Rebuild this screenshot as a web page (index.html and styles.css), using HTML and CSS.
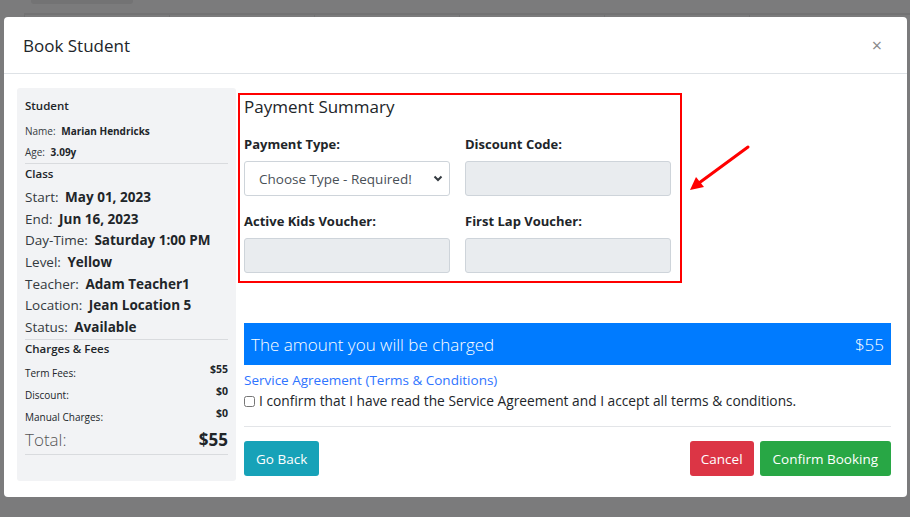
FILE: index.html
```html
<!DOCTYPE html>
<html lang="en">
<head>
    <meta charset="UTF-8">
    <meta name="viewport" content="width=device-width, initial-scale=1.0">
    <title>Book Student</title>
    <link rel="stylesheet" href="styles.css">
</head>
<body>
    <div class="backdrop-page">
        <div class="page-btn"></div>
        <div class="page-table">
            <span></span><span></span><span></span><span></span><span></span><span></span>
        </div>
    </div>

    <div class="modal">
        <div class="modal-header">
            <h5>Book Student</h5>
            <span class="close">&times;</span>
        </div>

        <div class="modal-body">
            <aside class="summary">
                <div class="group-title first">Student</div>
                <div class="small-row"><span>Name:</span> <b>Marian Hendricks</b></div>
                <div class="small-row"><span>Age:</span> <b>3.09y</b></div>
                <hr>
                <div class="group-title class-title">Class</div>
                <div class="big-row">Start: <b>May 01, 2023</b></div>
                <div class="big-row">End: <b>Jun 16, 2023</b></div>
                <div class="big-row">Day-Time: <b>Saturday 1:00 PM</b></div>
                <div class="big-row">Level: <b>Yellow</b></div>
                <div class="big-row">Teacher: <b>Adam Teacher1</b></div>
                <div class="big-row">Location: <b>Jean Location 5</b></div>
                <div class="big-row">Status: <b>Available</b></div>
                <hr>
                <div class="group-title fees-title">Charges &amp; Fees</div>
                <div class="fee-row"><span>Term Fees:</span><b>$55</b></div>
                <div class="fee-row"><span>Discount:</span><b>$0</b></div>
                <div class="fee-row"><span>Manual Charges:</span><b>$0</b></div>
                <div class="total-row"><span>Total:</span><b>$55</b></div>
                <hr>
            </aside>

            <section class="main">
                <div class="payment">
                    <h4>Payment Summary</h4>
                    <div class="form-grid">
                        <div class="field">
                            <label>Payment Type:</label>
                            <div class="select">
                                <span>Choose Type - Required!</span>
                                <svg width="10" height="7" viewBox="0 0 10 7"><path d="M1.5 1.5 L5 5 L8.5 1.5" fill="none" stroke="#343a40" stroke-width="2"/></svg>
                            </div>
                        </div>
                        <div class="field">
                            <label>Discount Code:</label>
                            <div class="input"></div>
                        </div>
                        <div class="field">
                            <label>Active Kids Voucher:</label>
                            <div class="input"></div>
                        </div>
                        <div class="field">
                            <label>First Lap Voucher:</label>
                            <div class="input"></div>
                        </div>
                    </div>
                    <div class="highlight"></div>
                    <svg class="arrow" width="70" height="50" viewBox="0 0 70 50">
                        <line x1="61" y1="4" x2="12" y2="40" stroke="#ff0000" stroke-width="3" stroke-linecap="round"/>
                        <polygon points="3,47 9,34 17,44" fill="#ff0000"/>
                    </svg>
                </div>

                <div class="charge-bar">
                    <span>The amount you will be charged</span>
                    <span>$55</span>
                </div>

                <a class="terms" href="#">Service Agreement (Terms &amp; Conditions)</a>
                <label class="confirm"><input type="checkbox"> I confirm that I have read the Service Agreement and I accept all terms &amp; conditions.</label>

                <div class="actions">
                    <button class="btn btn-info">Go Back</button>
                    <div class="right-btns">
                        <button class="btn btn-danger">Cancel</button>
                        <button class="btn btn-success">Confirm Booking</button>
                    </div>
                </div>
            </section>
        </div>
    </div>
</body>
</html>
```

FILE: styles.css
```css
body {
    margin: 0;
    background-color: #7b7b7c;
    font-family: 'Open Sans', sans-serif;
    color: #212529;
    height: 517px;
    overflow: hidden;
    position: relative;
}
.backdrop-page {
    position: absolute;
    top: 0;
    left: 0;
    right: 0;
}
.page-btn {
    position: absolute;
    left: 31px;
    top: -4px;
    width: 102px;
    height: 8px;
    border-radius: 3px;
    background-color: #737374;
}
.page-table {
    position: absolute;
    left: 24px;
    right: 0;
    top: 13px;
    height: 4px;
    border-top: 2px solid #727273;
    display: flex;
}
.page-table span {
    width: 144px;
    border-left: 1px solid #727273;
}
.modal {
    position: relative;
    margin: 17px 3px 0 4px;
    height: 480px;
    background-color: white;
    border-radius: 4px;
    box-sizing: border-box;
}
.modal-header {
    height: 57px;
    border-bottom: 1px solid #dee2e6;
    display: flex;
    align-items: center;
    justify-content: space-between;
    padding: 0 25px 0 19px;
    box-sizing: border-box;
}
.modal-header h5 {
    margin: 0;
    font-size: 17px;
    font-weight: 400;
}
.close {
    color: #8a8a8a;
    font-size: 18px;
    margin-top: 0;
}
.modal-body {
    display: grid;
    grid-template-columns: 219px 647px;
    column-gap: 8px;
    padding: 14px 16px 15px 13px;
}
.summary {
    background-color: #f2f3f5;
    border-radius: 3px;
    padding: 8px 8px 0;
    height: 393px;
    box-sizing: border-box;
}
.summary hr {
    border: none;
    border-top: 1px solid #d9dbde;
    margin: 0;
}
.group-title {
    font-size: 11.5px;
    font-weight: 600;
    height: 20px;
    line-height: 20px;
}
.group-title.first {
    margin-bottom: 5px;
}
.group-title.class-title {
    margin-bottom: 3px;
}
.group-title.fees-title {
    margin-top: -1px;
    margin-bottom: 3px;
}
.small-row {
    font-size: 10px;
    line-height: 21px;
    color: #343a40;
}
.small-row b {
    font-weight: 700;
    color: #212529;
    margin-left: 3px;
}
.big-row {
    font-size: 13.5px;
    line-height: 21.67px;
    color: #343a40;
}
.big-row b {
    font-weight: 700;
    color: #212529;
    margin-left: 3px;
}
.fee-row {
    display: flex;
    justify-content: space-between;
    font-size: 10px;
    line-height: 22px;
    height: 22px;
}
.fee-row b {
    font-size: 10.5px;
    margin-top: -4px;
}
.total-row {
    display: flex;
    justify-content: space-between;
    align-items: baseline;
    height: 26px;
}
.total-row span {
    font-size: 17px;
    font-weight: 300;
    color: #555;
}
.total-row b {
    font-size: 17px;
    font-weight: 700;
}
.main {
    display: flex;
    flex-direction: column;
    font-size: 13px;
}
.payment {
    position: relative;
    padding-top: 8px;
}
.payment h4 {
    margin: 0;
    font-size: 17px;
    font-weight: 400;
    line-height: 22px;
}
.form-grid {
    display: grid;
    grid-template-columns: 206px 206px;
    column-gap: 15px;
    row-gap: 15px;
    margin-top: 16px;
}
.field label {
    display: block;
    font-weight: 700;
    font-size: 13px;
    line-height: 20px;
    margin-bottom: 7px;
}
.select, .input {
    height: 35px;
    border: 1px solid #ced4da;
    border-radius: 3px;
    box-sizing: border-box;
}
.select {
    display: flex;
    align-items: center;
    justify-content: space-between;
    padding: 0 6px 0 14px;
    color: #495057;
    font-size: 13.5px;
}
.input {
    background-color: #e9ecef;
}
.highlight {
    position: absolute;
    left: -6px;
    top: 5px;
    width: 444px;
    height: 190px;
    border: 2px solid #ff0000;
    box-sizing: border-box;
}
.arrow {
    position: absolute;
    left: 443px;
    top: 55px;
}
.charge-bar {
    margin-top: 50px;
    height: 42px;
    background-color: #007bff;
    color: white;
    display: flex;
    align-items: center;
    justify-content: space-between;
    padding: 0 7px;
    font-size: 17px;
    font-weight: 300;
}
.terms {
    color: #2f74ff;
    text-decoration: none;
    margin-top: 5px;
    line-height: 20px;
    font-size: 13.5px;
}
.confirm {
    display: flex;
    align-items: center;
    gap: 4px;
    line-height: 20px;
    margin-top: 1px;
    color: #212529;
    font-size: 13.75px;
}
.confirm input {
    margin: 0;
    width: 11px;
    height: 11px;
}
.actions {
    margin-top: 15px;
    border-top: 1px solid #e3e5e8;
    padding-top: 14px;
    display: flex;
    justify-content: space-between;
}
.right-btns {
    display: flex;
    gap: 6px;
}
.btn {
    border: none;
    border-radius: 3px;
    color: white;
    font-family: 'Open Sans', sans-serif;
    font-size: 13.5px;
    height: 35px;
    padding: 0 12px;
}
.btn-danger {
    background-color: #dc3545;
    padding: 0 11px;
}
.btn-info {
    background-color: #17a2b8;
}
.btn-success {
    background-color: #28a745;
    padding: 0 13px;
}
```
